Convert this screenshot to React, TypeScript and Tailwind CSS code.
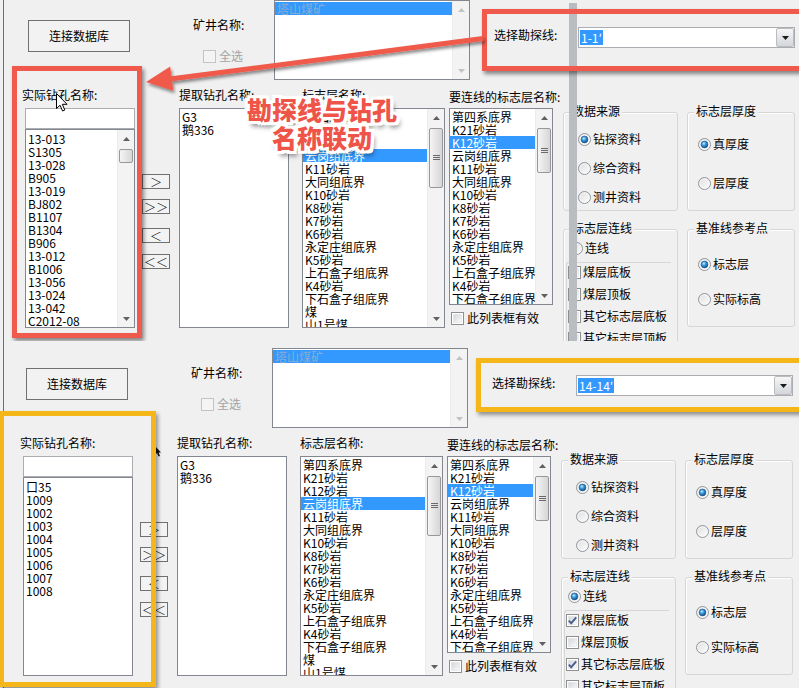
import React from "react";

const F = "font-['Liberation_Sans_Narrow','Noto_Sans_CJK_SC',sans-serif]";

const LAYERS = [
  "第四系底界",
  "K21砂岩",
  "K12砂岩",
  "云岗组底界",
  "K11砂岩",
  "大同组底界",
  "K10砂岩",
  "K8砂岩",
  "K7砂岩",
  "K6砂岩",
  "永定庄组底界",
  "K5砂岩",
  "上石盒子组底界",
  "K4砂岩",
  "下石盒子组底界",
  "煤",
  "山1号煤",
];

const HOLES_TOP = [
  "13-013",
  "S1305",
  "13-028",
  "B905",
  "13-019",
  "BJ802",
  "B1107",
  "B1304",
  "B906",
  "13-012",
  "B1006",
  "13-056",
  "13-024",
  "13-042",
  "C2012-08",
];

const HOLES_BOTTOM = ["口35", "1009", "1002", "1003", "1004", "1005", "1006", "1007", "1008"];

function Radio({ checked }: { checked: boolean }) {
  return (
    <svg width="13" height="13" viewBox="0 0 13 13" className="shrink-0">
      <defs>
        <linearGradient id="rbg" x1="0" y1="0" x2="1" y2="1">
          <stop offset="0" stopColor="#dcdcdc" />
          <stop offset="1" stopColor="#ffffff" />
        </linearGradient>
        <radialGradient id="rdot" cx="0.4" cy="0.35" r="0.75">
          <stop offset="0" stopColor="#b8ecff" />
          <stop offset="0.45" stopColor="#2f8fd6" />
          <stop offset="1" stopColor="#0a3f7a" />
        </radialGradient>
      </defs>
      <circle cx="6.5" cy="6.5" r="6" fill="url(#rbg)" stroke="#8e959c" />
      <circle cx="6.5" cy="6.5" r="4.6" fill="none" stroke="#f7f7f7" strokeWidth="0.8" />
      {checked && <circle cx="6.5" cy="6.5" r="3.4" fill="url(#rdot)" stroke="#234f7d" strokeWidth="0.6" />}
    </svg>
  );
}

function Check({ checked = false, disabled = false }: { checked?: boolean; disabled?: boolean }) {
  return (
    <svg width="13" height="13" viewBox="0 0 13 13" className="shrink-0">
      <defs>
        <linearGradient id="cbg" x1="0" y1="0" x2="1" y2="1">
          <stop offset="0" stopColor="#d2d6dc" />
          <stop offset="1" stopColor="#fafafa" />
        </linearGradient>
      </defs>
      <rect x="0.5" y="0.5" width="12" height="12" fill={disabled ? "#f4f4f4" : "#ffffff"} stroke={disabled ? "#c4c4c4" : "#8e8f8f"} />
      {!disabled && <rect x="2.5" y="2.5" width="8" height="8" fill="url(#cbg)" stroke="#e2e2e2" strokeWidth="0.6" />}
      {checked && <path d="M2.8 6.6 L5.2 9.2 L10.2 3.4" stroke="#4b5f8f" strokeWidth="1.9" fill="none" />}
    </svg>
  );
}

function Tri({ up, color }: { up: boolean; color: string }) {
  return (
    <svg width="7" height="4" viewBox="0 0 7 4">
      <path d={up ? "M0 4L3.5 0L7 4Z" : "M0 0L3.5 4L7 0Z"} fill={color} />
    </svg>
  );
}

function VScroll({ thumbCls, grip = false, disabled = false }: { thumbCls?: string; grip?: boolean; disabled?: boolean }) {
  const c = disabled ? "#c2c2c2" : "#606060";
  return (
    <div className="w-[17px] shrink-0 flex flex-col bg-[#f3f3f3] border-l border-[#ececec]">
      <div className="h-[17px] flex items-center justify-center">
        <Tri up color={c} />
      </div>
      <div className="flex-1">
        {thumbCls && (
          <div
            className={`mt-[2px] mx-[1px] rounded-[2px] border border-[#979797] bg-gradient-to-r from-[#f5f5f5] to-[#d6d6d6] flex items-center justify-center ${thumbCls}`}
          >
            {grip && (
              <svg width="7" height="6" viewBox="0 0 7 6">
                <path d="M0 0.5H7M0 2.5H7M0 4.5H7" stroke="#6a6a6a" strokeWidth="1" />
              </svg>
            )}
          </div>
        )}
      </div>
      <div className="h-[17px] flex items-center justify-center">
        <Tri up={false} color={c} />
      </div>
    </div>
  );
}

function ListBox({
  items,
  sel = -1,
  cls,
  pt = "pt-[1px]",
  scroll,
  selText = "text-white",
}: {
  items: string[];
  sel?: number;
  cls: string;
  pt?: string;
  scroll?: React.ReactNode;
  selText?: string;
}) {
  return (
    <div className={`border border-[#828790] bg-white flex overflow-hidden shrink-0 ${cls}`}>
      <div className={`flex-1 min-w-0 ${pt}`}>
        {items.map((t, i) => (
          <div
            key={i}
            className={`h-[13px] leading-[13px] pl-[2px] whitespace-nowrap ${i === sel ? `bg-[#3399ff] ${selText}` : ""}`}
          >
            {t}
          </div>
        ))}
      </div>
      {scroll}
    </div>
  );
}

function Group({ title, cls, pad, children }: { title: string; cls: string; pad: string; children?: React.ReactNode }) {
  return (
    <div className={`border border-[#d6d6d6] rounded-[3px] shadow-[inset_1px_1px_0_#ffffff] ${cls}`}>
      <div className="-mt-[10px] ml-[6px] px-[2px] w-fit bg-[#f0f0f0] leading-[16px]">{title}</div>
      <div className={pad}>{children}</div>
    </div>
  );
}

function RadioRow({ label, checked, cls = "" }: { label: string; checked: boolean; cls?: string }) {
  return (
    <div className={`h-[16px] flex items-center gap-[2px] ${cls}`}>
      <Radio checked={checked} />
      <span className="leading-[16px]">{label}</span>
    </div>
  );
}

function CheckRow({ label, checked }: { label: string; checked: boolean }) {
  return (
    <div className="h-[16px] flex items-center gap-[2px]">
      <Check checked={checked} />
      <span className="leading-[16px]">{label}</span>
    </div>
  );
}

function SmallBtn({ label, cls }: { label: string; cls: string }) {
  return (
    <div
      className={`w-[28px] h-[15px] border border-[#707070] bg-[#f3f3f3] flex items-center justify-center text-[12px] leading-[13px] font-['Noto_Sans_CJK_SC',sans-serif] font-light ${cls}`}
    >
      {label}
    </div>
  );
}

function Panel({ bottom }: { bottom: boolean }) {
  return (
    <div className={`w-[801px] flex flex-col ${F} text-[12px] text-black ${bottom ? "-ml-[2px] mt-[7px]" : ""}`}>
      {/* row 1 */}
      <div className="flex h-[85px] shrink-0">
        <div className="pl-[28px] pt-[20px]">
          <div className="w-[102px] h-[32px] border border-[#707070] bg-[#f2f2f2] flex items-center justify-center leading-[16px]">
            连接数据库
          </div>
        </div>
        <div className="ml-[63px] w-[81px] pt-[17px]">
          <div className="leading-[16px]">矿井名称:</div>
          <div className="mt-[15px] pl-[10px] h-[16px] flex items-center gap-[3px] text-[#a3a3a3]">
            <Check disabled />
            <span className="leading-[16px]">全选</span>
          </div>
        </div>
        <ListBox
          items={["塔山煤矿"]}
          sel={0}
          selText="text-[#88aad6]"
          cls="w-[196px] h-[80px]"
          scroll={<VScroll disabled />}
        />
        <div className="ml-[24px] pt-[27px] flex items-start">
          <div className="w-[84px] leading-[16px]">选择勘探线:</div>
          <div className="w-[217px] h-[21px] border border-[#abadb3] bg-white flex items-center">
            <span className="ml-[1px] h-[15px] px-[1px] bg-[#3399ff] text-white leading-[15px]">{bottom ? "14-14′" : "1-1′"}</span>
            <div className="ml-auto w-[18px] h-[19px] border border-[#bcbcbc] rounded-[2px] bg-gradient-to-b from-[#f6f6f6] to-[#d3d6dc] flex items-center justify-center">
              <svg width="7" height="4" viewBox="0 0 7 4">
                <path d="M0 0L3.5 4L7 0Z" fill="#1a1a1a" />
              </svg>
            </div>
          </div>
        </div>
      </div>

      {/* row 2 */}
      <div className="flex">
        <div className="ml-[22px] w-[120px] shrink-0">
          <div className="mt-[2px] leading-[16px]">实际钻孔名称:</div>
          <div className="ml-[3px] mt-[5px] w-[110px] h-[21px] border border-[#abadb3] bg-white" />
          <ListBox
            items={bottom ? HOLES_BOTTOM : HOLES_TOP}
            cls="ml-[3px] w-[110px] h-[199px]"
            pt="pt-[2px]"
            scroll={bottom ? undefined : <VScroll thumbCls="h-[14px]" />}
          />
        </div>
        <div className="w-[28px] shrink-0 flex flex-col">
          <SmallBtn label="＞" cls="mt-[89px]" />
          <SmallBtn label="＞＞" cls="mt-[10px]" />
          <SmallBtn label="＜" cls="mt-[14px]" />
          <SmallBtn label="＜＜" cls="mt-[11px]" />
        </div>
        <div className="ml-[9px] w-[110px] shrink-0">
          <div className="mt-[2px] leading-[16px]">提取钻孔名称:</div>
          <ListBox items={["G3", "鹅336"]} cls="mt-[5px] w-[110px] h-[220px]" />
        </div>
        <div className="ml-[13px] w-[143px] shrink-0">
          <div className="mt-[2px] leading-[16px]">标志层名称:</div>
          <ListBox items={LAYERS} sel={3} cls="mt-[5px] w-[143px] h-[220px]" scroll={<VScroll thumbCls="h-[60px]" grip />} />
        </div>
        <div className="ml-[4px] w-[104px] shrink-0">
          <div className="mt-[4px] leading-[16px] whitespace-nowrap">要连线的标志层名称:</div>
          <ListBox
            items={LAYERS.slice(0, 15)}
            sel={2}
            cls="mt-[3px] w-[104px] h-[197px]"
            scroll={<VScroll thumbCls="h-[45px]" grip />}
          />
          <div className="mt-[5px] pl-[2px] h-[16px] flex items-center gap-[3px]">
            <Check />
            <span className="leading-[16px]">此列表框有效</span>
          </div>
        </div>
        <div className="ml-[10px] mt-[27px] grid grid-cols-[115px_108px] gap-x-[9px] gap-y-[18px] items-start">
          <Group title="数据来源" cls="h-[99px]" pad="pl-[14px]">
            <RadioRow label="钻探资料" checked cls="mt-[12px]" />
            <RadioRow label="综合资料" checked={false} cls="mt-[13px]" />
            <RadioRow label="测井资料" checked={false} cls="mt-[13px]" />
          </Group>
          <Group title="标志层厚度" cls="h-[99px]" pad="pl-[10px]">
            <RadioRow label="真厚度" checked cls="mt-[17px]" />
            <RadioRow label="层厚度" checked={false} cls="mt-[23px]" />
          </Group>
          <Group title="标志层连线" cls="h-[140px]" pad="pl-[6px]">
            <RadioRow label="连线" checked={bottom} cls="mt-[4px]" />
            <div className="-ml-[4px] mt-[6px] w-[105px] h-[90px] border-l border-t border-[#d6d6d6] rounded-tl-[3px] pl-[1px] pt-[1px] flex flex-col gap-[6px]">
              <CheckRow label="煤层底板" checked={bottom} />
              <CheckRow label="煤层顶板" checked={false} />
              <CheckRow label="其它标志层底板" checked={bottom} />
              <CheckRow label="其它标志层顶板" checked={false} />
            </div>
          </Group>
          <Group title="基准线参考点" cls="h-[98px]" pad="pl-[10px]">
            <RadioRow label="标志层" checked cls="mt-[20px]" />
            <RadioRow label="实际标高" checked={false} cls="mt-[19px]" />
          </Group>
        </div>
      </div>
    </div>
  );
}

function Cursor() {
  return (
    <svg width="12" height="19" viewBox="0 0 12 19">
      <path d="M0.5 0.5 L0.5 15.5 L4 12.2 L6.6 18 L8.8 17 L6.3 11.3 L11 11.3 Z" fill="#ffffff" stroke="#000000" strokeWidth="1" strokeLinejoin="round" />
    </svg>
  );
}

const ANNOT_SHADOW =
  "[text-shadow:2px_0_0_#fff,-2px_0_0_#fff,0_2px_0_#fff,0_-2px_0_#fff,2px_2px_0_#fff,-2px_-2px_0_#fff,2px_-2px_0_#fff,-2px_2px_0_#fff,3px_0_0_#fff,-3px_0_0_#fff,0_3px_0_#fff,0_-3px_0_#fff,3px_3px_0_#fff,-3px_3px_0_#fff,3px_-3px_0_#fff,-3px_-3px_0_#fff,3px_5px_5px_rgba(0,0,0,0.55)]";

export default function App() {
  return (
    <div className="w-[799px] h-[688px] overflow-hidden bg-[#f0f0f0] flex flex-col">
      {/* top screenshot */}
      <div className="relative h-[341px] overflow-hidden shrink-0">
        <Panel bottom={false} />
        <div className="absolute left-[3px] top-0 bottom-0 w-px bg-[#6e6e6e]" />
        <div className="absolute left-[569px] top-[3px] bottom-0 w-[8px] bg-[#b9bcc1]" />
        <div className="absolute left-[56px] top-[93px]">
          <Cursor />
        </div>
        <div className="absolute left-[12px] top-[66px] w-[130px] h-[272px] border-[5px] border-[#ef5a4c] shadow-[2px_3px_4px_rgba(0,0,0,0.45)]" />
        <div className="absolute left-[482px] top-[9px] w-[330px] h-[62px] border-[5px] border-[#ef5a4c] shadow-[2px_3px_4px_rgba(0,0,0,0.45)]" />
        <svg width="799" height="341" viewBox="0 0 799 341" className="absolute left-0 top-0 pointer-events-none">
          <defs>
            <filter id="ads" x="-10%" y="-60%" width="120%" height="220%">
              <feDropShadow dx="1.5" dy="2.5" stdDeviation="1.4" floodColor="#000" floodOpacity="0.45" />
            </filter>
          </defs>
          <g filter="url(#ads)">
            <line x1="170" y1="79" x2="483" y2="38.5" stroke="#ef5a4c" strokeWidth="5" />
            <polygon points="146,82 170.2,66.5 173.3,90.7" fill="#ef5a4c" />
          </g>
        </svg>
        <div
          className={`absolute left-[232px] top-[95px] w-[180px] text-center font-['Noto_Sans_CJK_SC',sans-serif] font-black text-[25px] leading-[28px] text-[#ee5548] ${ANNOT_SHADOW}`}
        >
          <div>勘探线与钻孔</div>
          <div>名称联动</div>
        </div>
      </div>

      {/* bottom screenshot */}
      <div className="relative h-[347px] overflow-hidden shrink-0">
        <Panel bottom />
        <div className="absolute left-[3px] top-0 bottom-0 w-px bg-[#6e6e6e]" />
        <div className="absolute left-[155px] top-[105px]">
          <svg width="6" height="11" viewBox="0 0 6 11">
            <path d="M0 0 L0 9 L2 7 L3.5 10.5 L5 10 L3.6 6.5 L6 6.5 Z" fill="#111" />
          </svg>
        </div>
        <div className="absolute -left-[1px] top-[70px] w-[157px] h-[276px] border-[5px] border-[#f5b619] shadow-[2px_3px_4px_rgba(0,0,0,0.4)]" />
        <div className="absolute left-[476px] top-[17px] w-[330px] h-[54px] border-[5px] border-[#f5b619] shadow-[2px_3px_4px_rgba(0,0,0,0.4)]" />
      </div>
    </div>
  );
}
